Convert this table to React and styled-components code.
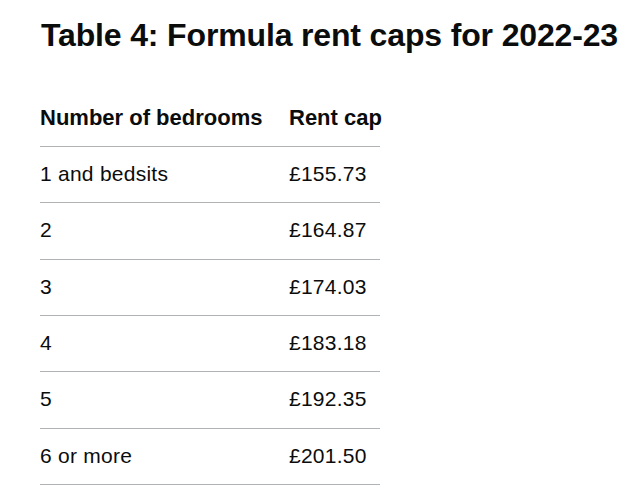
import React from "react";
import styled, { createGlobalStyle } from "styled-components";

const GlobalStyle = createGlobalStyle`
  body {
    margin: 0;
    background: #ffffff;
    color: #0b0c0c;
    font-family: "Liberation Sans", Arial, sans-serif;
  }
`;

const Page = styled.main`
  padding: 15px 20px 0 40px;
`;

const Title = styled.h2`
  margin: 0 0 50px 1px;
  font-size: 32px;
  line-height: 40px;
  font-weight: 700;
  letter-spacing: -0.15px;
`;

const Table = styled.table`
  border-collapse: collapse;
  border-spacing: 0;
  table-layout: fixed;
  width: 340px;
`;

const HeadCell = styled.th`
  text-align: left;
  font-size: 22px;
  line-height: 25px;
  font-weight: 700;
  padding: 0 20px 16px 0;
  border-bottom: 1px solid #b1b4b6;
  width: ${(p) => p.$width}px;
  white-space: nowrap;
  &:last-child {
    padding-right: 0;
  }
`;

const Cell = styled.td`
  font-size: 21px;
  line-height: 25px;
  letter-spacing: 0.25px;
  padding: 14px 20px 16.33px 0;
  border-bottom: 1px solid #b1b4b6;
  &:last-child {
    padding-right: 0;
  }
`;

const rows = [
  ["1 and bedsits", "£155.73"],
  ["2", "£164.87"],
  ["3", "£174.03"],
  ["4", "£183.18"],
  ["5", "£192.35"],
  ["6 or more", "£201.50"],
];

export default function App() {
  return (
    <Page>
      <GlobalStyle />
      <Title>Table 4: Formula rent caps for 2022-23</Title>
      <Table>
        <thead>
          <tr>
            <HeadCell $width={229}>Number of bedrooms</HeadCell>
            <HeadCell $width={91}>Rent cap</HeadCell>
          </tr>
        </thead>
        <tbody>
          {rows.map(([beds, cap]) => (
            <tr key={beds}>
              <Cell>{beds}</Cell>
              <Cell>{cap}</Cell>
            </tr>
          ))}
        </tbody>
      </Table>
    </Page>
  );
}
